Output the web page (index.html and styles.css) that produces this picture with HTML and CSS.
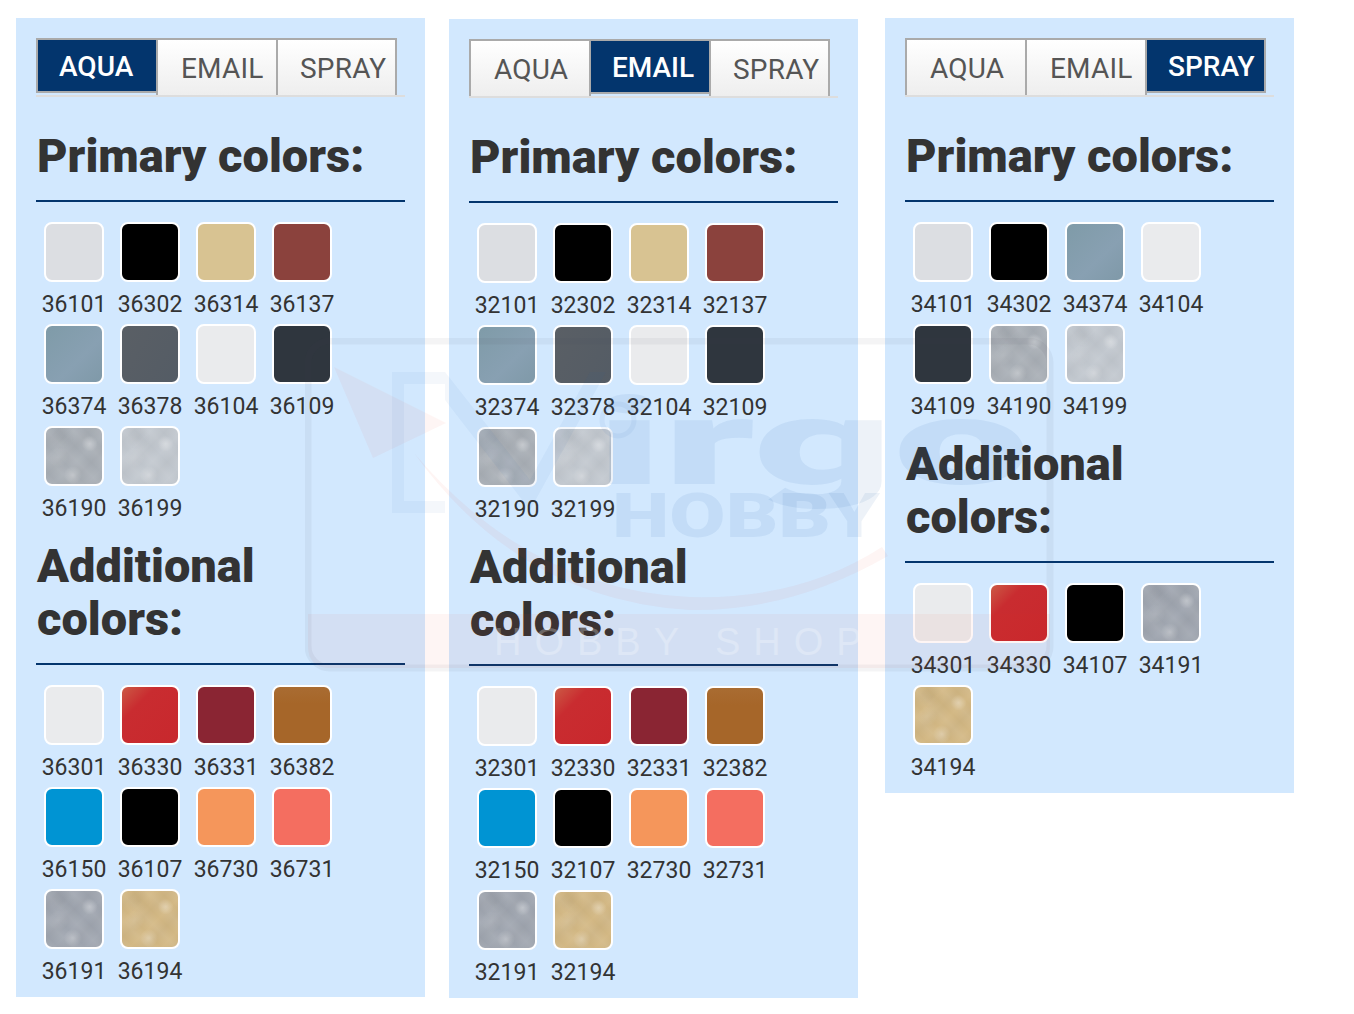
FILE: index.html
```html
<!DOCTYPE html>
<html lang="en">
<head>
    <meta charset="UTF-8">
    <meta name="viewport" content="width=device-width, initial-scale=1.0">
    <title>Paint colors</title>
    <link rel="stylesheet" href="styles.css">
</head>
<body>
    <div class="page">
        <div class="panel">
            <div class="tabs">
                <div class="tab active">AQUA</div>
                <div class="tab">EMAIL</div>
                <div class="tab">SPRAY</div>
            </div>
            <h2 class="first">Primary colors:</h2>
            <div class="colors">
                <div class="color"><div class="swatch light-gray"></div>36101</div>
                <div class="color"><div class="swatch black"></div>36302</div>
                <div class="color"><div class="swatch sand"></div>36314</div>
                <div class="color"><div class="swatch oxide"></div>36137</div>
                <div class="color"><div class="swatch blue-gray"></div>36374</div>
                <div class="color"><div class="swatch slate"></div>36378</div>
                <div class="color"><div class="swatch off-white"></div>36104</div>
                <div class="color"><div class="swatch gunship"></div>36109</div>
                <div class="color"><div class="swatch silver"></div>36190</div>
                <div class="color"><div class="swatch pale-silver"></div>36199</div>
            </div>
            <h2>Additional<br>colors:</h2>
            <div class="colors">
                <div class="color"><div class="swatch off-white"></div>36301</div>
                <div class="color"><div class="swatch red"></div>36330</div>
                <div class="color"><div class="swatch maroon"></div>36331</div>
                <div class="color"><div class="swatch bronze"></div>36382</div>
                <div class="color"><div class="swatch cyan"></div>36150</div>
                <div class="color"><div class="swatch black"></div>36107</div>
                <div class="color"><div class="swatch orange"></div>36730</div>
                <div class="color"><div class="swatch coral"></div>36731</div>
                <div class="color"><div class="swatch steel"></div>36191</div>
                <div class="color"><div class="swatch gold"></div>36194</div>
            </div>
        </div>

        <div class="panel panel-mid">
            <div class="tabs">
                <div class="tab">AQUA</div>
                <div class="tab active">EMAIL</div>
                <div class="tab">SPRAY</div>
            </div>
            <h2 class="first">Primary colors:</h2>
            <div class="colors">
                <div class="color"><div class="swatch light-gray"></div>32101</div>
                <div class="color"><div class="swatch black"></div>32302</div>
                <div class="color"><div class="swatch sand"></div>32314</div>
                <div class="color"><div class="swatch oxide"></div>32137</div>
                <div class="color"><div class="swatch blue-gray"></div>32374</div>
                <div class="color"><div class="swatch slate"></div>32378</div>
                <div class="color"><div class="swatch off-white"></div>32104</div>
                <div class="color"><div class="swatch gunship"></div>32109</div>
                <div class="color"><div class="swatch silver"></div>32190</div>
                <div class="color"><div class="swatch pale-silver"></div>32199</div>
            </div>
            <h2>Additional<br>colors:</h2>
            <div class="colors">
                <div class="color"><div class="swatch off-white"></div>32301</div>
                <div class="color"><div class="swatch red"></div>32330</div>
                <div class="color"><div class="swatch maroon"></div>32331</div>
                <div class="color"><div class="swatch bronze"></div>32382</div>
                <div class="color"><div class="swatch cyan"></div>32150</div>
                <div class="color"><div class="swatch black"></div>32107</div>
                <div class="color"><div class="swatch orange"></div>32730</div>
                <div class="color"><div class="swatch coral"></div>32731</div>
                <div class="color"><div class="swatch steel"></div>32191</div>
                <div class="color"><div class="swatch gold"></div>32194</div>
            </div>
        </div>

        <div class="panel">
            <div class="tabs">
                <div class="tab">AQUA</div>
                <div class="tab">EMAIL</div>
                <div class="tab active">SPRAY</div>
            </div>
            <h2 class="first">Primary colors:</h2>
            <div class="colors">
                <div class="color"><div class="swatch light-gray"></div>34101</div>
                <div class="color"><div class="swatch black"></div>34302</div>
                <div class="color"><div class="swatch blue-gray"></div>34374</div>
                <div class="color"><div class="swatch off-white"></div>34104</div>
                <div class="color"><div class="swatch gunship"></div>34109</div>
                <div class="color"><div class="swatch silver"></div>34190</div>
                <div class="color"><div class="swatch pale-silver"></div>34199</div>
            </div>
            <h2>Additional<br>colors:</h2>
            <div class="colors">
                <div class="color"><div class="swatch off-white"></div>34301</div>
                <div class="color"><div class="swatch red"></div>34330</div>
                <div class="color"><div class="swatch black"></div>34107</div>
                <div class="color"><div class="swatch steel"></div>34191</div>
                <div class="color"><div class="swatch gold"></div>34194</div>
            </div>
        </div>
    </div>

    <!-- faint shop watermark over the whole page -->
    <svg class="watermark" viewBox="305 338 750 335" width="750" height="335">
        <rect x="308" y="341" width="742" height="327" rx="22" class="wm-frame"/>
        <path d="M308 614 H1050 V646 Q1050 668 1028 668 H330 Q308 668 308 646 Z" class="wm-band"/>
        <path d="M334 367 L446 423 L373 458 Z" class="wm-red"/>
        <path d="M414 453 Q530 590 690 597 Q800 600 882 547 L888 556 Q790 612 690 610 Q520 600 414 453 Z" class="wm-red"/>
        <path d="M392 372 H445 V384 H404 V501 H445 V513 H392 Z" class="wm-blue"/>
        <path d="M445 372 L530 480 L590 372 L606 372 L530 510 L445 400 Z" class="wm-blue"/>
        <circle cx="618" cy="420" r="16" class="wm-ring"/>
        <text x="596" y="484" textLength="434" lengthAdjust="spacingAndGlyphs" class="wm-logo">irgo</text>
        <text x="612" y="537" textLength="268" lengthAdjust="spacingAndGlyphs" class="wm-hobby">HOBBY</text>
        <text x="494" y="655" class="wm-shop">HOBBY SHOP</text>
    </svg>
</body>
</html>
```

FILE: styles.css
```css
body {
    margin: 0;
    font-family: "Roboto", "Noto Sans", sans-serif;
    background-color: #fff;
    color: #333;
}

.page {
    display: flex;
    align-items: flex-start;
    gap: 24px;
    padding: 18px 0 16px 16px;
}

.panel {
    width: 369px;
    padding: 20px 20px 6px;
    background-color: #d2e8fe;
}

.panel-mid {
    margin-top: 1px;
    margin-right: 3px;
}

/* tabs */
.tabs {
    display: flex;
    align-items: flex-start;
    height: 57px;
    border-bottom: 2px solid #ddd;
}

.tab {
    box-sizing: border-box;
    width: 122px;
    height: 57px;
    margin-right: -2px;
    padding: 9px 0 0 23px;
    border: 2px solid #aaa;
    border-bottom: none;
    background: linear-gradient(#fff, #eee);
    color: #555;
    font-size: 28px;
    letter-spacing: 0.2px;
    line-height: 40px;
}

.tab:last-child {
    width: 121px;
    padding-left: 22px;
}

.tab.active {
    height: 55px;
    padding-top: 7px;
    padding-left: 21px;
    border-bottom: 2px solid #aaa;
    background: #03356d;
    color: #fff;
    font-weight: 500;
    letter-spacing: 0;
}

/* headings */
h2 {
    margin: 11px 0 0;
    padding: 0 0 18px 1px;
    border-bottom: 2px solid #03356d;
    font-size: 47px;
    font-weight: 900;
    line-height: 53px;
    color: #333;
}

h2.first {
    margin-top: 32px;
}

/* swatches */
.colors {
    display: grid;
    grid-template-columns: repeat(4, 76px);
    grid-auto-rows: 102px;
    margin-top: 20px;
}

.color {
    text-align: center;
    font-size: 23px;
    line-height: 28px;
    color: #333;
}

.swatch {
    box-sizing: border-box;
    width: 60px;
    height: 60px;
    margin: 0 auto 9px;
    border: 2px solid #fff;
    border-radius: 8px;
}

.light-gray { background-color: #dcdee2; }
.black { background-color: #000; }
.sand { background-color: #d8c392; }
.oxide { background-color: #8b423d; }
.blue-gray { background: linear-gradient(135deg, #7f9ba8, #88a0b2 60%, #7f99a8); }
.slate { background: linear-gradient(120deg, #5a5f65, #545c65); }
.off-white { background-color: #eaebed; }
.gunship { background-color: #2f363e; }
.red { background: linear-gradient(135deg, #cc5a45, #c92c30 30%, #c8282d); }
.maroon { background-color: #8a2533; }
.bronze { background: linear-gradient(#a96c32, #a66629 30%); }
.cyan { background-color: #0094d3; }
.orange { background-color: #f5965b; }
.coral { background-color: #f46e60; }

/* metallic paints get a soft blotchy sheen */
.silver,
.pale-silver,
.steel,
.gold {
    background-image:
        radial-gradient(circle at 78% 28%, rgba(255, 255, 255, 0.3), rgba(255, 255, 255, 0) 8px),
        radial-gradient(circle at 48% 84%, rgba(255, 255, 255, 0.3), rgba(255, 255, 255, 0) 9px),
        radial-gradient(circle at 22% 52%, rgba(255, 255, 255, 0.16), rgba(255, 255, 255, 0) 10px),
        radial-gradient(circle at 30% 18%, rgba(0, 0, 0, 0.05), rgba(0, 0, 0, 0) 12px),
        repeating-linear-gradient(45deg, rgba(255, 255, 255, 0.08), rgba(255, 255, 255, 0) 9px, rgba(255, 255, 255, 0.08) 19px),
        repeating-linear-gradient(-45deg, rgba(0, 0, 0, 0.035), rgba(0, 0, 0, 0) 11px, rgba(0, 0, 0, 0.035) 23px);
}

.silver { background-color: #a9afb6; }
.pale-silver { background-color: #c2c8cf; }
.steel { background-color: #a0a6b0; }
.gold { background-color: #d3b884; }

/* watermark */
.watermark {
    position: absolute;
    left: 305px;
    top: 338px;
    pointer-events: none;
}

.wm-frame {
    fill: none;
    stroke: rgba(60, 70, 90, 0.06);
    stroke-width: 7;
}

.wm-band { fill: rgba(230, 60, 40, 0.05); }
.wm-red { fill: rgba(230, 60, 40, 0.05); }
.wm-blue { fill: rgba(30, 90, 170, 0.05); }

.wm-ring {
    fill: none;
    stroke: rgba(30, 90, 170, 0.06);
    stroke-width: 5;
}

.wm-logo {
    font-family: "Roboto", sans-serif;
    font-size: 120px;
    font-weight: 900;
    fill: rgba(30, 90, 170, 0.08);
}

.wm-hobby {
    font-family: "Roboto", sans-serif;
    font-size: 61px;
    font-weight: 900;
    fill: rgba(30, 90, 170, 0.08);
}

.wm-shop {
    font-family: "Liberation Sans", sans-serif;
    font-size: 38px;
    letter-spacing: 13px;
    fill: rgba(255, 255, 255, 0.25);
}
```
